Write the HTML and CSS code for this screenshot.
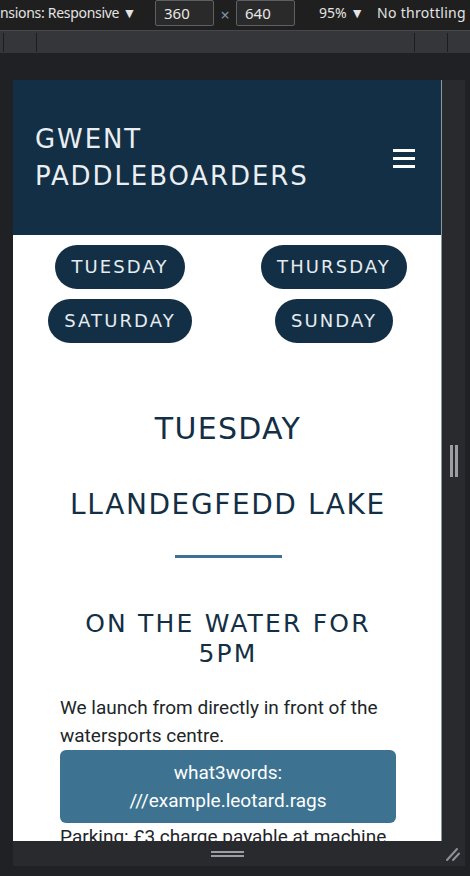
FILE: index.html
```html
<!DOCTYPE html>
<html lang="en">
<head>
<meta charset="utf-8">
<title>Gwent Paddleboarders — responsive preview</title>
<link rel="stylesheet" href="styles.css">
</head>
<body>
<div class="devtools">
  <div class="toolbar">
    <span class="tb-label tb-dims">nsions: Responsive ▼</span>
    <span class="tb-input">360</span>
    <span class="tb-times">×</span>
    <span class="tb-input">640</span>
    <span class="tb-label tb-zoom">95% ▼</span>
    <span class="tb-label tb-throttle">No throttling ▼</span>
  </div>
  <div class="ruler">
    <div class="ruler-group"><span class="tick"></span><span class="tick"></span></div>
    <div class="ruler-group"><span class="tick"></span><span class="tick"></span></div>
  </div>
  <div class="stage">
    <div class="device">
      <div class="viewport">
        <header class="site-header">
          <h1 class="brand">GWENT<br>PADDLEBOARDERS</h1>
          <div class="burger"><span></span><span></span><span></span></div>
        </header>
        <nav class="days">
          <span class="day-pill">TUESDAY</span>
          <span class="day-pill">THURSDAY</span>
          <span class="day-pill">SATURDAY</span>
          <span class="day-pill">SUNDAY</span>
        </nav>
        <main class="content">
          <h2 class="day-title">TUESDAY</h2>
          <h3 class="location">LLANDEGFEDD LAKE</h3>
          <div class="rule"></div>
          <h4 class="time">ON THE WATER FOR 5PM</h4>
          <p class="text">We launch from directly in front of the watersports centre.</p>
          <div class="w3w"><span class="w3w-line">what3words:</span><span class="w3w-line">///example.leotard.rags</span></div>
          <p class="text">Parking: £3 charge payable at machine</p>
        </main>
      </div>
      <div class="side-handle"><span class="grip-bar"></span><span class="grip-bar"></span></div>
      <div class="bottom-bar">
        <div class="bottom-grip"><span class="grip-line"></span><span class="grip-line"></span></div>
        <div class="corner">
          <svg width="16" height="16" viewBox="0 0 16 16"><path d="M2 14 L12 3 M8 14 L14 7.5" stroke="#8e9297" stroke-width="2" stroke-linecap="round" fill="none"/></svg>
        </div>
      </div>
    </div>
  </div>
</div>
</body>
</html>
```
FILE: styles.css
```css
* { box-sizing: border-box; }
html, body { margin: 0; padding: 0; }
body {
  width: 470px;
  height: 876px;
  overflow: hidden;
  background: #202124;
  font-family: "Noto Sans", "Open Sans", sans-serif;
}
.devtools { display: flex; flex-direction: column; height: 876px; }

/* toolbar */
.toolbar {
  height: 31px;
  display: flex;
  align-items: flex-start;
  background: #1f1f1f;
  border-bottom: 1px solid #46484c;
  color: #e3e3e3;
  font-size: 14px;
  white-space: nowrap;
  overflow: hidden;
}
.tb-label { line-height: 26px; }
.tb-dims { flex: 0 0 155px; letter-spacing: -0.3px; }
.tb-input {
  flex: 0 0 59px;
  height: 26px;
  line-height: 24px;
  padding-left: 8px;
  border: 1px solid #5d5f63;
  border-radius: 2px;
  background: #2a2a2b;
  color: #e8e8e8;
  font-size: 15px;
}
.tb-times {
  flex: 0 0 22px;
  text-align: center;
  line-height: 30px;
  font-size: 16px;
  color: #7f93a8;
}
.tb-zoom { margin-left: 24px; flex: 0 0 58px; }
.tb-throttle { letter-spacing: 0.3px; }

/* ruler */
.ruler {
  height: 22px;
  background: #35363a;
  display: flex;
  justify-content: space-between;
  align-items: center;
  padding: 0 22px 0 3px;
}
.ruler-group { display: flex; gap: 32px; }
.tick { width: 1px; height: 19px; background: #1d1d1f; }

/* stage */
.stage { flex: 1; padding: 27px 0 0 13px; }
.device {
  display: grid;
  grid-template-columns: 428px 24px;
  grid-template-rows: 761px 25px;
}
.viewport {
  background: #ffffff;
  overflow: hidden;
}
.side-handle {
  background: #292a2d;
  border-left: 1px solid #8a98a5;
  display: flex;
  justify-content: center;
  align-items: center;
  gap: 2px;
}
.grip-bar { width: 3px; height: 32px; background: #9a9ea3; }
.bottom-bar {
  grid-column: 1 / 3;
  background: #292a2d;
  display: grid;
  grid-template-columns: 428px 24px;
  align-items: center;
}
.bottom-grip {
  justify-self: center;
  display: flex;
  flex-direction: column;
  gap: 2px;
}
.grip-line { width: 33px; height: 2px; background: #9a9ea3; }
.corner { display: flex; justify-content: flex-end; padding-right: 4px; }
.corner svg { display: block; }

/* page */
.site-header {
  height: 155px;
  background: #132f45;
  display: flex;
  align-items: center;
  justify-content: space-between;
  padding: 0 26px 0 22px;
}
.brand {
  margin: 0;
  font-family: "DejaVu Sans", sans-serif;
  font-weight: 400;
  font-size: 26px;
  line-height: 37px;
  letter-spacing: 1.9px;
  color: #e9eef2;
}
.burger { display: flex; flex-direction: column; gap: 5px; margin-top: 1px; }
.burger span { display: block; width: 22px; height: 3px; background: #ffffff; }

.days {
  display: grid;
  grid-template-columns: 1fr 1fr;
  justify-items: center;
  row-gap: 10px;
  padding-top: 10px;
}
.day-pill {
  height: 44px;
  line-height: 44px;
  padding: 0 16px;
  border-radius: 22px;
  background: #132f45;
  color: #e6ebef;
  font-family: "DejaVu Sans", sans-serif;
  font-size: 18px;
  letter-spacing: 2.1px;
}

.content {
  padding: 0 45px 0 47px;
  color: #132f45;
}
.day-title, .location, .time {
  margin: 0;
  text-align: center;
  font-family: "DejaVu Sans", sans-serif;
  font-weight: 400;
}
.day-title { margin-top: 68px; font-size: 30px; line-height: 36px; letter-spacing: 1.3px; }
.location { margin-top: 41px; font-size: 28px; line-height: 34px; letter-spacing: 1.6px; }
.rule { width: 107px; height: 3px; margin: 33px auto 0; background: #3d7391; }
.time { margin-top: 51px; font-size: 25px; line-height: 30px; letter-spacing: 2.2px; }
.text {
  margin: 25px 0 0;
  font-family: Roboto, sans-serif;
  font-size: 19px;
  line-height: 28px;
  color: #212529;
}
.w3w {
  background: #3d7391;
  border-radius: 6px;
  padding: 8.5px 0;
  text-align: center;
  color: #ffffff;
  font-family: Roboto, sans-serif;
  font-size: 19px;
  line-height: 28px;
}
.w3w-line { display: block; }
.w3w + .text { margin-top: 0; }
```
